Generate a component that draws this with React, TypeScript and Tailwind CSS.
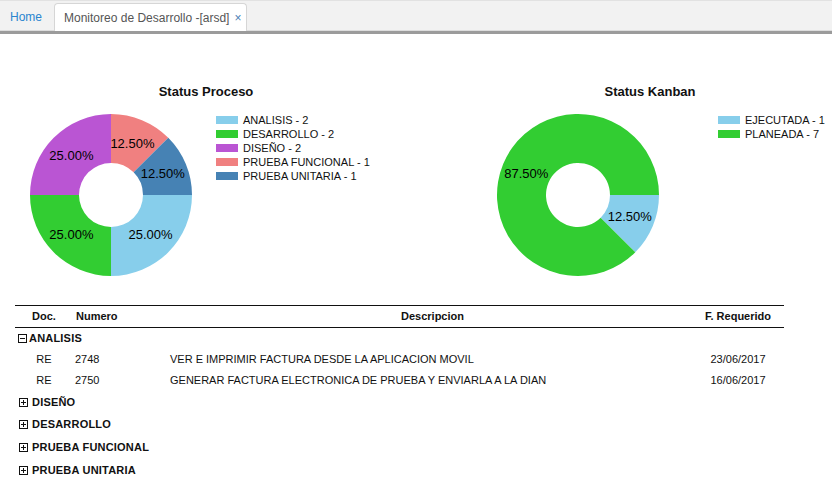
import React from "react";

type Slice = { label: string; value: number; color: string };

const FONT = { fontFamily: '"Liberation Sans", Arial, sans-serif' };

function arcPath(cx: number, cy: number, R: number, r: number, a0: number, a1: number) {
  const large = a1 - a0 > Math.PI ? 1 : 0;
  const p = (rad: number, a: number) => `${cx + rad * Math.cos(a)} ${cy + rad * Math.sin(a)}`;
  return `M ${p(R, a0)} A ${R} ${R} 0 ${large} 1 ${p(R, a1)} L ${p(r, a1)} A ${r} ${r} 0 ${large} 0 ${p(r, a0)} Z`;
}

function Donut({ data }: { data: Slice[] }) {
  const total = data.reduce((s, d) => s + d.value, 0);
  const cx = 85;
  const cy = 85;
  const R = 81;
  const r = 32;
  let a = 0;
  const parts = data.map((d) => {
    const a0 = a;
    const a1 = a + (d.value / total) * Math.PI * 2;
    a = a1;
    const mid = (a0 + a1) / 2;
    return {
      d,
      path: arcPath(cx, cy, R, r, a0, a1),
      lx: cx + 56 * Math.cos(mid),
      ly: cy + 56 * Math.sin(mid),
      pct: ((d.value / total) * 100).toFixed(2) + "%",
    };
  });
  return (
    <svg width={170} height={170} viewBox="0 0 170 170" className="shrink-0">
      {parts.map((p, i) => (
        <path key={i} d={p.path} fill={p.d.color} />
      ))}
      {parts.map((p, i) => (
        <text
          key={"t" + i}
          x={p.lx}
          y={p.ly}
          textAnchor="middle"
          dominantBaseline="central"
          fontSize={13}
          fill="#000"
          style={FONT}
        >
          {p.pct}
        </text>
      ))}
    </svg>
  );
}

function Legend({ data }: { data: Slice[] }) {
  return (
    <div className="mt-[3px] flex flex-col">
      {data.map((d) => (
        <div key={d.label} className="flex h-[14px] items-center text-[11px] leading-[14px] text-[#111]">
          <span className="mr-[5px] h-[8px] w-[22px]" style={{ background: d.color }} />
          <span>
            {d.label} - {d.value}
          </span>
        </div>
      ))}
    </div>
  );
}

const proceso: Slice[] = [
  { label: "ANALISIS", value: 2, color: "#87CEEB" },
  { label: "DESARROLLO", value: 2, color: "#32CD32" },
  { label: "DISEÑO", value: 2, color: "#BA55D3" },
  { label: "PRUEBA FUNCIONAL", value: 1, color: "#F08080" },
  { label: "PRUEBA UNITARIA", value: 1, color: "#4682B4" },
];

const kanban: Slice[] = [
  { label: "EJECUTADA", value: 1, color: "#87CEEB" },
  { label: "PLANEADA", value: 7, color: "#32CD32" },
];

function Box({ open }: { open: boolean }) {
  return (
    <svg width={9} height={9} viewBox="0 0 9 9" className="shrink-0">
      <rect x={0.5} y={0.5} width={8} height={8} fill="white" stroke="#111" strokeWidth={1} />
      <line x1={2} y1={4.5} x2={7} y2={4.5} stroke="#111" strokeWidth={1} />
      {!open && <line x1={4.5} y1={2} x2={4.5} y2={7} stroke="#111" strokeWidth={1} />}
    </svg>
  );
}

const cols = "grid grid-cols-[58px_92px_535px_76px_1fr] items-center";

export default function App() {
  return (
    <div className="h-[487px] w-[832px] overflow-hidden bg-white" style={FONT}>
      {/* Tab bar */}
      <div className="relative h-[34px] border-t border-[#e2e2e2] bg-[#f2f2f2]">
        <div className="flex h-[30px] items-end border-b border-[#dcdcdc]">
          <div className="flex h-[27px] items-center pl-[10px] pr-[12px] text-[12px] text-[#2a85cf]">Home</div>
          <div className="relative -mb-px flex h-[28px] w-[193px] items-center rounded-t-[4px] border border-b-0 border-[#d6d6d6] bg-white pl-[9px] text-[12px] text-[#555]">
            <span>Monitoreo de Desarrollo -[arsd]</span>
            <span className="ml-[5px] text-[12px] text-[#4d7fb5]">×</span>
          </div>
        </div>
        <div className="absolute bottom-0 left-0 right-0 h-[3px] bg-[#9b9b9b]" />
      </div>

      {/* Charts */}
      <div className="flex pt-[50px]">
        <div className="w-[412px] shrink-0">
          <div className="h-[16px] text-center text-[13px] font-bold leading-[16px] text-[#111]">Status Proceso</div>
          <div className="mt-[10px] flex pl-[26px]">
            <Donut data={proceso} />
            <div className="ml-[20px]">
              <Legend data={proceso} />
            </div>
          </div>
        </div>
        <div className="ml-[56px] w-[364px] shrink-0">
          <div className="h-[16px] text-center text-[13px] font-bold leading-[16px] text-[#111]">Status Kanban</div>
          <div className="mt-[10px] flex pl-[25px]">
            <Donut data={kanban} />
            <div className="ml-[55px]">
              <Legend data={kanban} />
            </div>
          </div>
        </div>
      </div>

      {/* Table */}
      <div className="ml-[15px] mt-[25px] w-[769px] text-[11px] text-[#111]">
        <div className={`${cols} h-[23px] border-y border-[#111] font-bold`}>
          <div className="text-center">Doc.</div>
          <div className="pl-[3px]">Numero</div>
          <div className="text-center">Descripcion</div>
          <div className="text-center">F. Requerido</div>
          <div />
        </div>
        <div className="flex h-[21px] items-center pl-[3px] font-bold tracking-[0.2px]">
          <Box open />
          <span className="ml-[2px]">ANALISIS</span>
        </div>
        <div className={`${cols} h-[21px]`}>
          <div className="text-center">RE</div>
          <div className="pl-[2px]">2748</div>
          <div className="pl-[5px]">VER E IMPRIMIR FACTURA DESDE LA APLICACION MOVIL</div>
          <div className="text-center">23/06/2017</div>
          <div />
        </div>
        <div className={`${cols} h-[21px]`}>
          <div className="text-center">RE</div>
          <div className="pl-[2px]">2750</div>
          <div className="pl-[5px]">GENERAR FACTURA ELECTRONICA DE PRUEBA Y ENVIARLA A LA DIAN</div>
          <div className="text-center">16/06/2017</div>
          <div />
        </div>
        {[
          ["DISEÑO", "h-[22px]"],
          ["DESARROLLO", "h-[23px]"],
          ["PRUEBA FUNCIONAL", "h-[23px]"],
          ["PRUEBA UNITARIA", "h-[22px]"],
        ].map(([g, h]) => (
          <div key={g} className={`flex ${h} items-center pl-[4px] font-bold tracking-[0.2px]`}>
            <Box open={false} />
            <span className="ml-[4px]">{g}</span>
          </div>
        ))}
      </div>
    </div>
  );
}
